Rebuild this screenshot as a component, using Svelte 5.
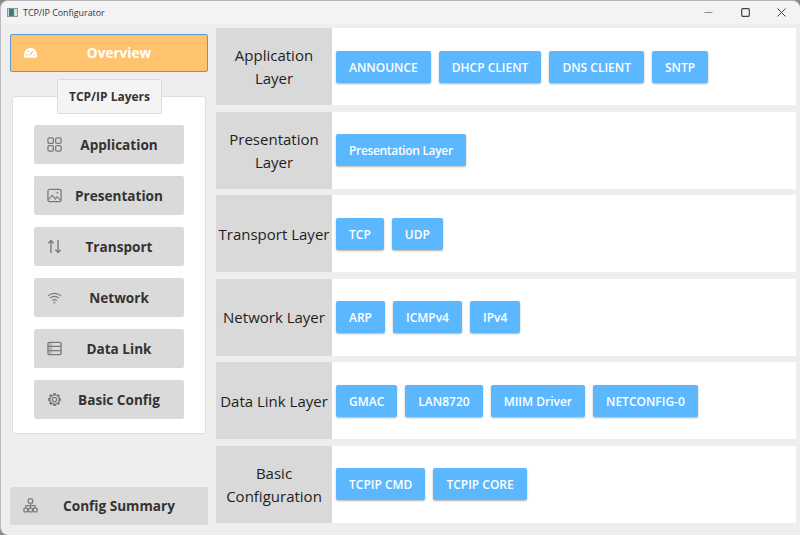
<script>
  const layers = [
    { name: "Application", icon: "grid" },
    { name: "Presentation", icon: "image" },
    { name: "Transport", icon: "updown" },
    { name: "Network", icon: "wifi" },
    { name: "Data Link", icon: "table" },
    { name: "Basic Config", icon: "gear" }
  ];

  const rows = [
    { title: ["Application", "Layer"], items: ["ANNOUNCE", "DHCP CLIENT", "DNS CLIENT", "SNTP"] },
    { title: ["Presentation", "Layer"], items: ["Presentation Layer"] },
    { title: ["Transport Layer"], items: ["TCP", "UDP"] },
    { title: ["Network Layer"], items: ["ARP", "ICMPv4", "IPv4"] },
    { title: ["Data Link Layer"], items: ["GMAC", "LAN8720", "MIIM Driver", "NETCONFIG-0"] },
    { title: ["Basic", "Configuration"], items: ["TCPIP CMD", "TCPIP CORE"] }
  ];

  const teeth = [0, 45, 90, 135, 180, 225, 270, 315];
</script>

{#snippet icon(kind)}
  <svg class="icon" viewBox="0 0 16 16" fill="none" stroke="currentColor" stroke-width="1.4">
    {#if kind === "grid"}
      <rect x="1" y="1" width="5.8" height="5.8" rx="1.5" />
      <rect x="9.2" y="1" width="5.8" height="5.8" rx="1.5" />
      <rect x="1" y="9.2" width="5.8" height="5.8" rx="1.5" />
      <rect x="9.2" y="9.2" width="5.8" height="5.8" rx="1.5" />
    {:else if kind === "image"}
      <rect x="1" y="1.5" width="14" height="13" rx="1.8" />
      <path d="M1.5 12.5 5.5 7.8 9.5 12.5M8.5 11.500l2.300-2 3.700 3.500" stroke-width="1.200" />
      <circle cx="11" cy="5" r=".9" fill="currentColor" stroke="none" />
    {:else if kind === "updown"}
      <path d="M4.200 15V1.600M1.400 4.600 4.200 1.600 7 4.600M11.800 1v13.400M9 11.400l2.800 3 2.800-3" stroke-width="1.500" />
    {:else if kind === "wifi"}
      <path d="M1 6.200C5 2.800 11 2.800 15 6.200M3.200 8.700C6 6.500 10 6.500 12.800 8.700M5.400 11.100c1.600-1.100 3.600-1.100 5.200 0" stroke-width="1.200" />
      <circle cx="8" cy="13.400" r="1" fill="currentColor" stroke="none" />
    {:else if kind === "table"}
      <rect x="1" y="1.500" width="14" height="13" rx="1.400" />
      <rect x="1.500" y="2" width="4" height="12" fill="currentColor" opacity=".35" stroke="none" />
      <path d="M1 5.800h14M1 10.200h14" />
    {:else if kind === "gear"}
      {#each teeth as a}
        <rect x="6.500" y="1" width="3" height="3" rx=".6" fill="currentColor" stroke="none" transform={`rotate(${a} 8 8)`} />
      {/each}
      <circle cx="8" cy="8" r="5" fill="#dadada" />
      <circle cx="8" cy="8" r="2.300" />
    {:else if kind === "gauge"}
      <path d="M2.400 13.500h11.200c.9 0 1.400-.8 1.400-2.400C15 6.700 11.900 2.800 8 2.800S1 6.700 1 11.100c0 1.600.5 2.400 1.400 2.400z" fill="currentColor" stroke="none" />
      <path d="M7 11 10.500 6.500M3.500 10.500h1.500M11.200 10.500h1.500M5 6.500l1 1" stroke="#ffc36e" stroke-width="1.300" />
    {:else if kind === "tree"}
      <rect x="5.700" y="1" width="4.600" height="4.400" rx="1" />
      <rect x="1" y="10.800" width="4" height="4" rx="1" />
      <rect x="6" y="10.800" width="4" height="4" rx="1" />
      <rect x="11" y="10.800" width="4" height="4" rx="1" />
      <path d="M8 5.400v5.400M3 10.800V8.100h10v2.700" stroke-width="1.200" />
    {/if}
  </svg>
{/snippet}

<div class="window">
  <header class="titlebar">
    <div class="app-icon"><span></span></div>
    <span class="app-title">TCP/IP Configurator</span>
    <div class="controls">
      <svg class="min" viewBox="0 0 9 9" stroke="currentColor" fill="none"><path d="M.500 4.500h8" stroke-width="1.200" /></svg>
      <svg viewBox="0 0 9 9" stroke="currentColor" fill="none"><rect x=".700" y=".700" width="7.600" height="7.600" rx="1" stroke-width="1.200" /></svg>
      <svg viewBox="0 0 9 9" stroke="currentColor" fill="none"><path d="M.500.500l8 8M8.500.500l-8 8" stroke-width="1" /></svg>
    </div>
  </header>

  <div class="body">
    <aside class="sidebar">
      <button class="side-btn overview">
        <span class="side-icon">{@render icon("gauge")}</span>
        <span class="side-label">Overview</span>
      </button>

      <section class="panel">
        <div class="legend">TCP/IP Layers</div>
        {#each layers as layer}
          <button class="side-btn layer">
            <span class="side-icon">{@render icon(layer.icon)}</span>
            <span class="side-label">{layer.name}</span>
          </button>
        {/each}
      </section>

      <button class="side-btn summary">
        <span class="side-icon">{@render icon("tree")}</span>
        <span class="side-label">Config Summary</span>
      </button>
    </aside>

    <main class="stack">
      {#each rows as row}
        <div class="row">
          <div class="row-title">
            {#each row.title as line}<span>{line}</span>{/each}
          </div>
          <div class="row-items">
            {#each row.items as item}
              <button class="chip" class:tight={item === "Presentation Layer"}>{item}</button>
            {/each}
          </div>
        </div>
      {/each}
    </main>
  </div>
</div>

<style>
  :global(body) {
    margin: 0;
    background: #8a8a88;
  }

  .window {
    width: 800px;
    height: 535px;
    box-sizing: border-box;
    display: flex;
    flex-direction: column;
    background: #eeeeee;
    border-top: 1px solid #b4b4b4;
    border-left: 1px solid #b9bcc2;
    border-radius: 8px 8px 0 8px;
    overflow: hidden;
    font-family: "Open Sans", "Noto Sans", sans-serif;
    color: #2b2b2b;
  }

  .titlebar {
    height: 23px;
    flex: none;
    display: flex;
    align-items: center;
    background: #f3f3f3;
    padding: 0 14px 0 6px;
  }

  .app-icon {
    width: 11px;
    height: 9px;
    box-sizing: border-box;
    background: #d5dde2;
    border: 1px solid #8f979e;
    margin-right: 5px;
  }

  .app-icon span {
    display: block;
    width: 5px;
    height: 7px;
    margin-left: 1px;
    background: linear-gradient(90deg, #3f6f80, #2f8f74);
  }

  .app-title {
    font-size: 8.900px;
    color: #333;
  }

  .controls {
    margin-left: auto;
    display: flex;
    gap: 27.500px;
    color: #444;
  }

  .controls svg {
    width: 9px;
    height: 9px;
  }

  .controls .min {
    color: #8c8c8c;
  }

  .body {
    flex: 1;
    min-height: 0;
    display: flex;
    padding: 4px 4px 10px 9px;
    gap: 8px;
  }

  .sidebar {
    width: 198px;
    flex: none;
    display: flex;
    flex-direction: column;
    padding-top: 5.500px;
  }

  .side-btn {
    display: flex;
    align-items: center;
    height: 38.500px;
    flex: none;
    border: none;
    border-radius: 2px;
    background: #dadada;
    padding: 0 8px 0 13px;
    font: inherit;
    font-weight: 700;
    font-size: 13.600px;
    color: #333;
  }

  .side-label {
    flex: 1;
    text-align: center;
  }

  .side-icon {
    display: flex;
    flex: none;
    width: 15px;
    color: #7b7b7b;
  }

  .icon {
    width: 15px;
    height: 15px;
  }

  .overview {
    background: #ffc36e;
    border: 1px solid #5b9bd5;
    box-sizing: border-box;
    padding: 0 7px 0 12px;
    color: #fff;
  }

  .overview .side-icon {
    color: #fff;
  }

  .panel {
    position: relative;
    margin: 24px 2px 0;
    height: 337.500px;
    box-sizing: border-box;
    background: #fff;
    border: 1px solid #dedede;
    border-radius: 3px;
    display: flex;
    flex-direction: column;
    align-items: center;
    gap: 12.500px;
    padding-top: 28px;
  }

  .legend {
    position: absolute;
    top: -18px;
    left: 44px;
    width: 105px;
    height: 35px;
    box-sizing: border-box;
    display: flex;
    align-items: center;
    justify-content: center;
    background: #f4f4f4;
    border: 1px solid #dcdcdc;
    border-radius: 2px;
    font-size: 12px;
    font-weight: 700;
    color: #333;
  }

  .layer {
    width: 150px;
  }

  .summary {
    margin-top: auto;
  }

  .stack {
    flex: 1;
    display: grid;
    grid-template-rows: repeat(6, 1fr);
    gap: 6.400px;
    margin-bottom: 2px;
  }

  .row {
    display: flex;
    background: #fff;
    min-height: 0;
  }

  .row-title {
    width: 116px;
    flex: none;
    background: #d9d9d9;
    display: flex;
    flex-direction: column;
    align-items: center;
    justify-content: center;
    padding-top: 1px;
    font-size: 15px;
    font-weight: 500;
    line-height: 23px;
    color: #1e1e1e;
    white-space: nowrap;
  }

  .row-items {
    display: flex;
    align-items: center;
    gap: 8px;
    padding-left: 4px;
  }

  .chip {
    height: 32px;
    padding: 1px 13px 0;
    border: none;
    border-radius: 2px;
    background: #5bb8ff;
    color: #fff;
    font: inherit;
    font-size: 12px;
    font-weight: 600;
    box-shadow: 0 1px 2px rgba(0, 0, 0, 0.3);
    white-space: nowrap;
  }

  .tight {
    letter-spacing: -0.33px;
  }
</style>
